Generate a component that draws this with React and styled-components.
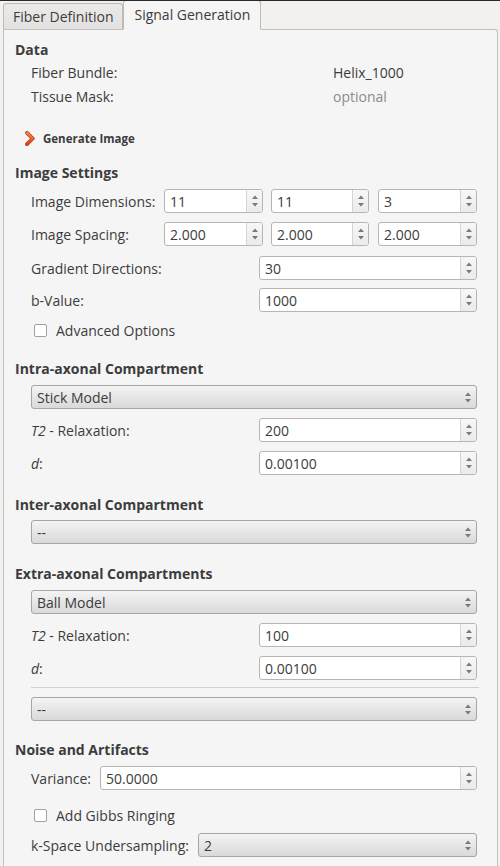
import React from "react";
import styled, { createGlobalStyle } from "styled-components";

const Global = createGlobalStyle`
  html, body { margin: 0; padding: 0; background: #f2f1f0; }
  body { font-family: "Open Sans", "Noto Sans", sans-serif; font-size: 14px; color: #3c3c3c; }
  * { box-sizing: border-box; }
`;

const Window = styled.div`
  width: 500px;
  height: 866px;
  overflow: hidden;
  background: #f2f1f0;
  border-top: 1px solid #2a2a2a;
  display: flex;
  flex-direction: column;
`;

const TabBar = styled.div`
  display: flex;
  align-items: flex-end;
  height: 29px;
  margin-top: -1px;
  padding-left: 3px;
  position: relative;
  z-index: 1;
`;

const Tab = styled.div`
  height: ${(p) => (p.$active ? "30px" : "26px")};
  padding: 0 ${(p) => (p.$active ? "10px" : "9px")};
  display: flex;
  align-items: center;
  font-size: 14px;
  color: #3c3c3c;
  border: 1px solid #bdbbb8;
  border-bottom: ${(p) => (p.$active ? "1px solid #f5f5f5" : "none")};
  border-radius: 3px 3px 0 0;
  background: ${(p) =>
    p.$active ? "#f5f5f5" : "linear-gradient(#ebeae9, #e2e1e0)"};
  margin-bottom: ${(p) => (p.$active ? "-1px" : "0")};
  padding-bottom: ${(p) => (p.$active ? "2px" : "0")};
`;

const Panel = styled.div`
  margin-left: 3px;
  width: 495px;
  flex: 1;
  background: #f5f5f5;
  border: 1px solid #c3c1bd;
  border-bottom: none;
  border-radius: 0 3px 0 0;
  padding: 11px 20px 0 11px;
  display: flex;
  flex-direction: column;
`;

const Header = styled.div`
  font-weight: 700;
  font-size: 14px;
  height: 18px;
  line-height: 18px;
  margin-top: ${(p) => p.$mt || 0}px;
  color: #3c3c3c;
`;

const Indent = styled.div`
  padding-left: 16px;
  display: flex;
  flex-direction: column;
`;

const Row = styled.div`
  display: flex;
  align-items: center;
  height: ${(p) => p.$h || 24}px;
  margin-top: ${(p) => p.$mt || 0}px;
`;

const Label = styled.div`
  width: ${(p) => p.$w}px;
  flex: none;
  white-space: nowrap;
  color: #3c3c3c;
`;

const Value = styled.div`
  color: ${(p) => (p.$muted ? "#8c8c8c" : "#3c3c3c")};
`;

const SpinBox = styled.div`
  display: flex;
  height: 24px;
  width: ${(p) => (p.$w ? p.$w + "px" : "auto")};
  flex: ${(p) => (p.$w ? "none" : "1")};
  margin-left: ${(p) => p.$ml || 0}px;
  background: #fff;
  border: 1px solid #b8b6b3;
  border-radius: 3px;
  overflow: hidden;
`;

const SpinText = styled.div`
  flex: 1;
  padding-left: 5px;
  display: flex;
  align-items: center;
  color: #3c3c3c;
  font-size: 14px;
`;

const SpinBtns = styled.div`
  width: 16px;
  flex: none;
  border-left: 1px solid #d6d5d3;
  background: linear-gradient(#f7f7f7, #ebebeb);
  display: flex;
  flex-direction: column;
  align-items: center;
  justify-content: space-between;
  padding: 5px 0 5px;
`;

const Combo = styled.div`
  display: flex;
  align-items: center;
  height: 24px;
  flex: 1;
  margin-top: ${(p) => p.$mt || 0}px;
  border: 1px solid #a8a6a3;
  border-radius: 3px;
  background: linear-gradient(#f4f4f4, #d9d9d9);
  padding: 0 0 0 5px;
  color: #3c3c3c;
`;

const ComboText = styled.div`
  flex: 1;
`;

const ComboArrows = styled.div`
  width: 16px;
  height: 100%;
  display: flex;
  flex-direction: column;
  align-items: center;
  justify-content: space-between;
  padding: 6px 0 5px;
`;

const Separator = styled.div`
  height: 1px;
  background: #d2d0cd;
  margin-top: ${(p) => p.$mt || 0}px;
  margin-right: -2px;
`;

const CheckRow = styled.label`
  display: flex;
  align-items: center;
  height: 18px;
  margin-top: ${(p) => p.$mt || 0}px;
  padding-left: 3px;
  gap: 9px;
`;

const Box = styled.span`
  width: 13px;
  height: 13px;
  background: #fff;
  border: 1px solid #a3a19e;
  border-radius: 2px;
`;

const GenRow = styled.div`
  display: flex;
  align-items: center;
  height: 18px;
  margin-top: ${(p) => p.$mt || 0}px;
  padding-left: 10px;
  gap: 8px;
  font-weight: 700;
  font-size: 11.5px;
`;

const Arrow = ({ up }) => (
  <svg width="6" height="4" viewBox="0 0 6 4">
    {up ? (
      <path d="M0 4 L3 0.5 L6 4 Z" fill="#7a7a7a" />
    ) : (
      <path d="M0 0 L3 3.5 L6 0 Z" fill="#7a7a7a" />
    )}
  </svg>
);

const Spin = ({ value, w, ml }) => (
  <SpinBox $w={w} $ml={ml}>
    <SpinText>{value}</SpinText>
    <SpinBtns>
      <Arrow up />
      <Arrow />
    </SpinBtns>
  </SpinBox>
);

const Select = ({ value, mt }) => (
  <Combo $mt={mt}>
    <ComboText>{value}</ComboText>
    <ComboArrows>
      <Arrow up />
      <Arrow />
    </ComboArrows>
  </Combo>
);

const Chevron = () => (
  <svg width="10" height="15" viewBox="0 0 10 15">
    <defs>
      <linearGradient id="chg" x1="0" y1="0" x2="0" y2="1">
        <stop offset="0" stopColor="#f28a4c" />
        <stop offset="1" stopColor="#d8461a" />
      </linearGradient>
    </defs>
    <path
      d="M2 1.8 L7.7 7.5 L2 13.2"
      fill="none"
      stroke="#c23a10"
      strokeWidth="3.8"
      strokeLinecap="round"
      strokeLinejoin="round"
    />
    <path
      d="M2 1.8 L7.7 7.5 L2 13.2"
      fill="none"
      stroke="url(#chg)"
      strokeWidth="2.3"
      strokeLinecap="round"
      strokeLinejoin="round"
    />
  </svg>
);

const It = styled.i`
  font-style: italic;
`;

export default function App() {
  return (
    <>
      <Global />
      <Window>
        <TabBar>
          <Tab>Fiber Definition</Tab>
          <Tab $active>Signal Generation</Tab>
        </TabBar>
        <Panel>
          <Header>Data</Header>
          <Indent>
            <Row $h={18} $mt={4}>
              <Label $w={302}>Fiber Bundle:</Label>
              <Value>Helix_1000</Value>
            </Row>
            <Row $h={18} $mt={6}>
              <Label $w={302}>Tissue Mask:</Label>
              <Value $muted>optional</Value>
            </Row>
          </Indent>
          <GenRow $mt={24}>
            <Chevron />
            Generate Image
          </GenRow>

          <Header $mt={17}>Image Settings</Header>
          <Indent>
            <Row $mt={7}>
              <Label $w={133}>Image Dimensions:</Label>
              <Spin value="11" w={99} />
              <Spin value="11" w={98} ml={8} />
              <Spin value="3" w={99} ml={9} />
            </Row>
            <Row $mt={9}>
              <Label $w={133}>Image Spacing:</Label>
              <Spin value="2.000" w={99} />
              <Spin value="2.000" w={98} ml={8} />
              <Spin value="2.000" w={99} ml={9} />
            </Row>
            <Row $mt={10}>
              <Label $w={228}>Gradient Directions:</Label>
              <Spin value="30" />
            </Row>
            <Row $mt={8}>
              <Label $w={228}>b-Value:</Label>
              <Spin value="1000" />
            </Row>
            <CheckRow $mt={9}>
              <Box />
              Advanced Options
            </CheckRow>
          </Indent>

          <Header $mt={21}>Intra-axonal Compartment</Header>
          <Indent>
            <Row $mt={7}>
              <Select value="Stick Model" />
            </Row>
            <Row $mt={9}>
              <Label $w={228}>
                <It>T2</It> - Relaxation:
              </Label>
              <Spin value="200" />
            </Row>
            <Row $mt={9}>
              <Label $w={228}>
                <It>d</It>:
              </Label>
              <Spin value="0.00100" />
            </Row>
          </Indent>

          <Header $mt={21}>Inter-axonal Compartment</Header>
          <Indent>
            <Row $mt={6}>
              <Select value="--" />
            </Row>
          </Indent>

          <Header $mt={21}>Extra-axonal Compartments</Header>
          <Indent>
            <Row $mt={7}>
              <Select value="Ball Model" />
            </Row>
            <Row $mt={9}>
              <Label $w={228}>
                <It>T2</It> - Relaxation:
              </Label>
              <Spin value="100" />
            </Row>
            <Row $mt={9}>
              <Label $w={228}>
                <It>d</It>:
              </Label>
              <Spin value="0.00100" />
            </Row>
            <Separator $mt={7} />
            <Row $mt={9}>
              <Select value="--" />
            </Row>
          </Indent>

          <Header $mt={20}>Noise and Artifacts</Header>
          <Indent>
            <Row $mt={7}>
              <Label $w={69}>Variance:</Label>
              <Spin value="50.0000" />
            </Row>
            <CheckRow $mt={16}>
              <Box />
              Add Gibbs Ringing
            </CheckRow>
            <Row $mt={9}>
              <Label $w={167}>k-Space Undersampling:</Label>
              <Select value="2" />
            </Row>
          </Indent>
        </Panel>
      </Window>
    </>
  );
}
